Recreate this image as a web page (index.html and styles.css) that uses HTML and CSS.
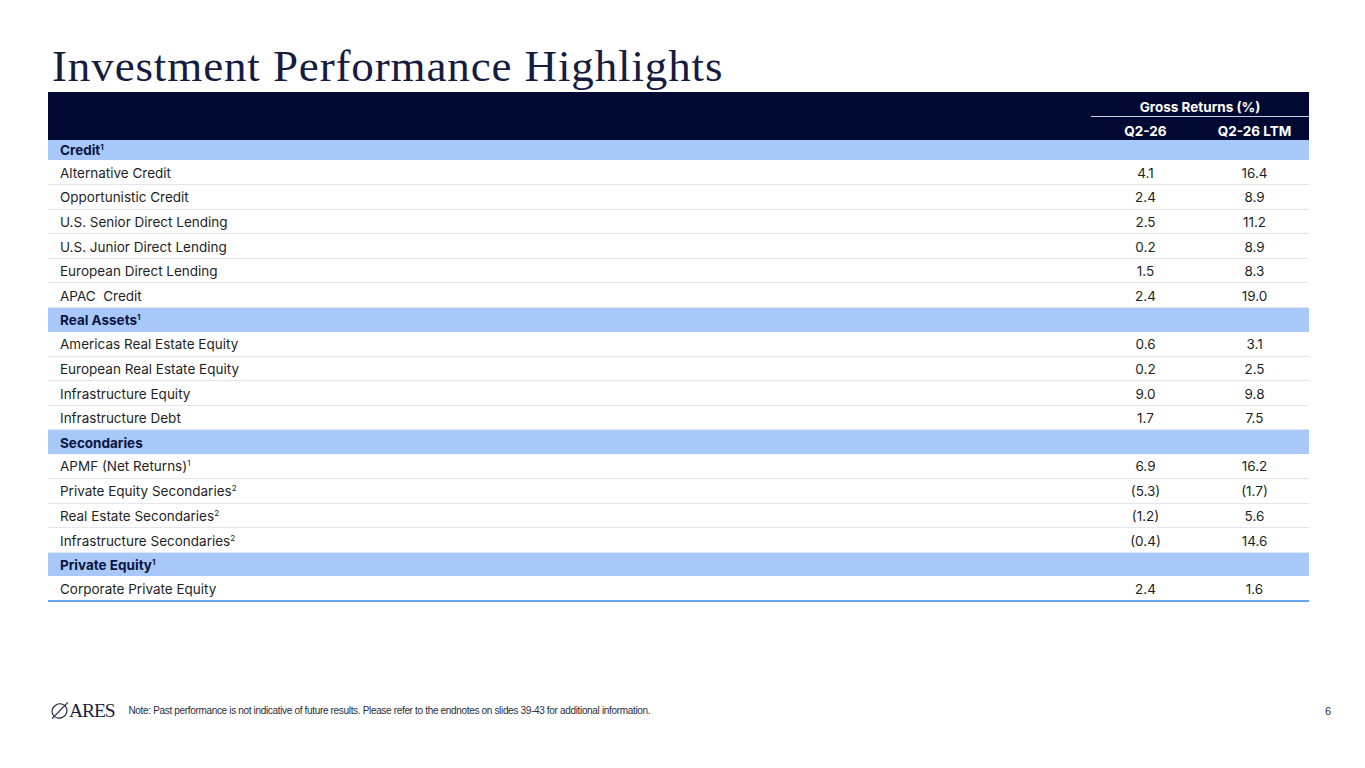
FILE: index.html
```html
<!DOCTYPE html>
<html>
<head>
<meta charset="utf-8">
<link rel="stylesheet" href="styles.css">
</head>
<body>
<div class="slide">
  <h1 class="title">Investment Performance Highlights</h1>
  <table class="perf">
    <colgroup><col class="c-label"><col class="c-num"><col class="c-num"></colgroup>
    <thead>
      <tr class="h1"><th></th><th colspan="2" class="group">Gross Returns (%)</th></tr>
      <tr class="h2"><th></th><th>Q2-26</th><th>Q2-26 LTM</th></tr>
    </thead>
    <tbody>
      <tr class="sec first"><td colspan="3">Credit<sup>1</sup></td></tr>
      <tr><td>Alternative Credit</td><td>4.1</td><td>16.4</td></tr>
      <tr><td>Opportunistic Credit</td><td>2.4</td><td>8.9</td></tr>
      <tr><td>U.S. Senior Direct Lending</td><td>2.5</td><td>11.2</td></tr>
      <tr><td>U.S. Junior Direct Lending</td><td>0.2</td><td>8.9</td></tr>
      <tr><td>European Direct Lending</td><td>1.5</td><td>8.3</td></tr>
      <tr><td>APAC&nbsp; Credit</td><td>2.4</td><td>19.0</td></tr>
      <tr class="sec"><td colspan="3">Real Assets<sup>1</sup></td></tr>
      <tr><td>Americas Real Estate Equity</td><td>0.6</td><td>3.1</td></tr>
      <tr><td>European Real Estate Equity</td><td>0.2</td><td>2.5</td></tr>
      <tr><td>Infrastructure Equity</td><td>9.0</td><td>9.8</td></tr>
      <tr><td>Infrastructure Debt</td><td>1.7</td><td>7.5</td></tr>
      <tr class="sec"><td colspan="3">Secondaries</td></tr>
      <tr><td>APMF (Net Returns)<sup class="lt">1</sup></td><td>6.9</td><td>16.2</td></tr>
      <tr><td>Private Equity Secondaries<sup class="lt">2</sup></td><td>(5.3)</td><td>(1.7)</td></tr>
      <tr><td>Real Estate Secondaries<sup class="lt">2</sup></td><td>(1.2)</td><td>5.6</td></tr>
      <tr><td>Infrastructure Secondaries<sup class="lt">2</sup></td><td>(0.4)</td><td>14.6</td></tr>
      <tr class="sec"><td colspan="3">Private Equity<sup>1</sup></td></tr>
      <tr class="last"><td>Corporate Private Equity</td><td>2.4</td><td>1.6</td></tr>
    </tbody>
  </table>
  <footer class="foot">
    <div class="logo">
      <svg class="mark" width="19" height="19" viewBox="0 0 20 19">
        <ellipse cx="10" cy="10" rx="8" ry="7.4" fill="none" stroke="#1c2240" stroke-width="1.2" transform="rotate(-30 10 10)"/>
        <path d="M2.2 18 L18.8 1" stroke="#1c2240" stroke-width="1.2" fill="none"/>
      </svg>
      <span class="word">ARES</span>
    </div>
    <p class="note">Note: Past performance is not indicative of future results. Please refer to the endnotes on slides 39-43 for additional information.</p>
    <span class="pg">6</span>
  </footer>
</div>
</body>
</html>
```
FILE: styles.css
```css
html, body {
  margin: 0;
  padding: 0;
  background: #ffffff;
}
.slide {
  width: 1365px;
  height: 768px;
  box-sizing: border-box;
  padding: 0 56px 0 48px;
  display: flex;
  flex-direction: column;
}
.title {
  margin: 0;
  padding: 39px 0 0 4px;
  height: 53px;
  box-sizing: content-box;
  font-family: "Liberation Serif", "DejaVu Serif", serif;
  font-weight: normal;
  font-size: 45px;
  line-height: 54px;
  color: #161c40;
  letter-spacing: 0.88px;
  white-space: nowrap;
}
.perf {
  width: 1261px;
  border-collapse: collapse;
  font-family: Inter, "Noto Sans", sans-serif;
  font-size: 13.5px;
  color: #1e1f26;
}
.c-num { width: 109px; }
.perf thead tr { background: #020a33; }
.perf thead th {
  color: #ffffff;
  font-weight: 700;
  font-size: 13.5px;
  padding: 0;
  box-sizing: border-box;
  text-align: center;
  vertical-align: middle;
}
.perf .h1 th { height: 24px; }
.perf .h1 th.group { border-bottom: 1px solid #c9cfe0; padding-top: 7px; }
.perf .h2 th { height: 24px; padding-top: 6px; }
.perf td {
  height: 24.6px;
  padding: 1px 0 0;
  box-sizing: border-box;
  border-bottom: 1px solid #e3e6ef;
  text-align: center;
}
.perf td:first-child {
  text-align: left;
  padding-left: 12px;
}
.perf tr.sec td {
  background: #a8c8fa;
  font-weight: 700;
  color: #0a1440;
  height: 24px;
  border-bottom: none;
}
.perf tr.sec.first td { height: 20px; padding-top: 0; }
.perf sup {
  font-size: 8px;
  line-height: 0;
  vertical-align: 5px;
}
.perf sup.lt { font-weight: 400; }
.perf tr.last td { border-bottom: 2px solid #6aa4ec; }
.foot {
  margin-top: auto;
  margin-right: -22px;
  height: 74px;
  display: flex;
  align-items: flex-start;
  padding-top: 6px;
  box-sizing: border-box;
}
.logo {
  display: flex;
  align-items: center;
  margin-left: 2px;
  height: 22px;
}
.mark { display: block; margin-top: -1px; }
.word {
  font-family: "Liberation Serif", serif;
  font-size: 19.5px;
  color: #1c2240;
  letter-spacing: -1.1px;
  line-height: 22px;
}
.note {
  margin: 0 0 0 14px;
  font-family: "Liberation Sans", Arial, sans-serif;
  font-size: 10px;
  line-height: 22px;
  color: #2a2d3a;
  letter-spacing: -0.33px;
  flex: 1;
}
.pg {
  font-family: "Liberation Sans", Arial, sans-serif;
  font-size: 11px;
  line-height: 22px;
  color: #2a2d3a;
}
```
